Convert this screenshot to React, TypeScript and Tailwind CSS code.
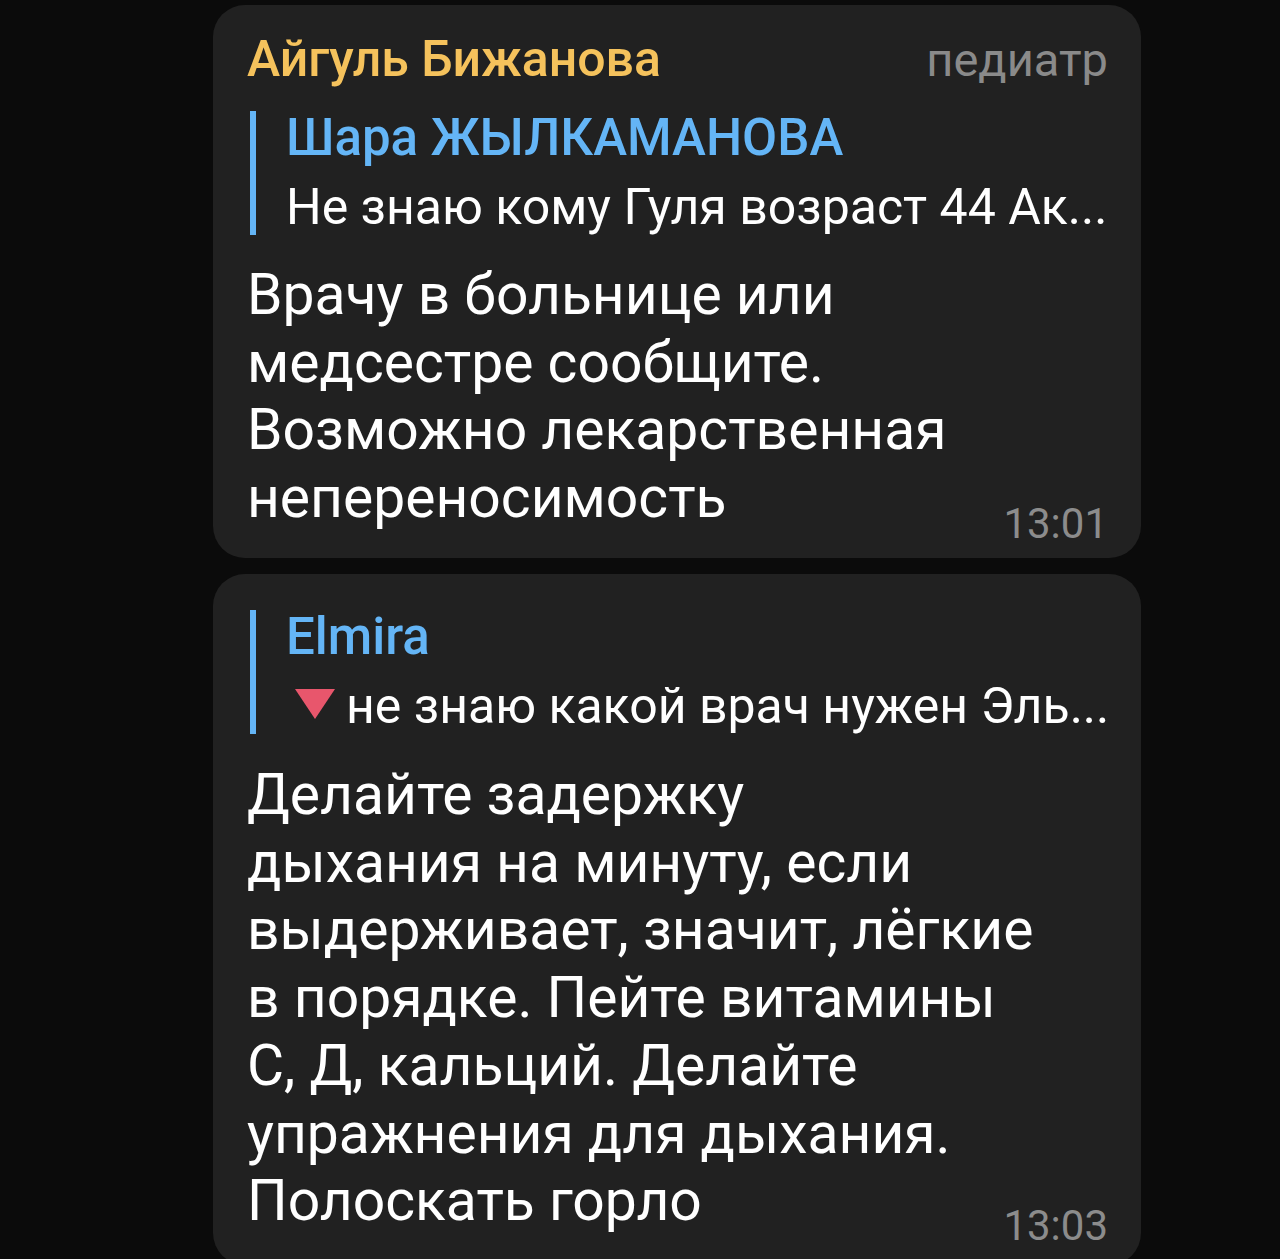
export default function App() {
  return (
    <div className="min-h-[1259px] bg-[#0b0b0b] overflow-hidden" style={{ fontFamily: 'Roboto, "Noto Sans", sans-serif' }}>
      <div className="ml-[213px] w-[928px] pt-[5px] flex flex-col gap-[16px]">
        {/* первое сообщение */}
        <div className="bg-[#212121] rounded-[32px] pl-[34px] pr-[33px] pt-[24px] pb-[27px]">
          <div className="flex items-baseline justify-between">
            <span className="text-[#f5c25c] text-[50px] font-medium leading-[60px]">Айгуль Бижанова</span>
            <span className="text-[#8a8a8a] text-[47px] leading-[60px]">педиатр</span>
          </div>
          <div className="mt-[21px]">
            <Reply name="Шара ЖЫЛКАМАНОВА" text="Не знаю кому Гуля возраст 44 Ак..." />
          </div>
          <div className="relative mt-[26px] text-white text-[57px] leading-[67.5px]">
            Врачу в больнице или<br />медсестре сообщите.<br />Возможно лекарственная<br />непереносимость
            <span className="absolute right-0 bottom-[-14px] text-[#8c8c8c] text-[42px] leading-none">13:01</span>
          </div>
        </div>

        {/* второе сообщение */}
        <div className="bg-[#212121] rounded-[32px] pl-[34px] pr-[33px] pt-[36px] pb-[30px]">
          <Reply name="Elmira" text="не знаю какой врач нужен Эль..." triangle />
          <div className="relative mt-[27px] text-white text-[57px] leading-[67.7px]">
            Делайте задержку<br />дыхания на минуту, если<br />выдерживает, значит, лёгкие<br />в порядке. Пейте витамины<br />С, Д, кальций. Делайте<br />упражнения для дыхания.<br />Полоскать горло
            <span className="absolute right-0 bottom-[-12px] text-[#8c8c8c] text-[42px] leading-none">13:03</span>
          </div>
        </div>
      </div>
    </div>
  );
}

function Reply({ name, text, triangle }: { name: string; text: string; triangle?: boolean }) {
  return (
    <div className="flex">
      <div className="ml-[3px] w-[6px] bg-[#64b5f6] shrink-0" />
      <div className="pl-[30px] flex flex-col">
        <span className="text-[#64b5f6] text-[51px] font-medium leading-[54px] whitespace-nowrap">{name}</span>
        <span className="mt-[14px] text-white text-[50px] leading-[56px] flex items-center whitespace-nowrap">
          {triangle && (
            <svg width="42" height="32" viewBox="0 0 42 32" className="ml-[8px] mr-[10px] -mt-[4px] shrink-0">
              <polygon points="1,1 41,1 21,31" fill="#e8566c" />
            </svg>
          )}
          {text}
        </span>
      </div>
    </div>
  );
}
